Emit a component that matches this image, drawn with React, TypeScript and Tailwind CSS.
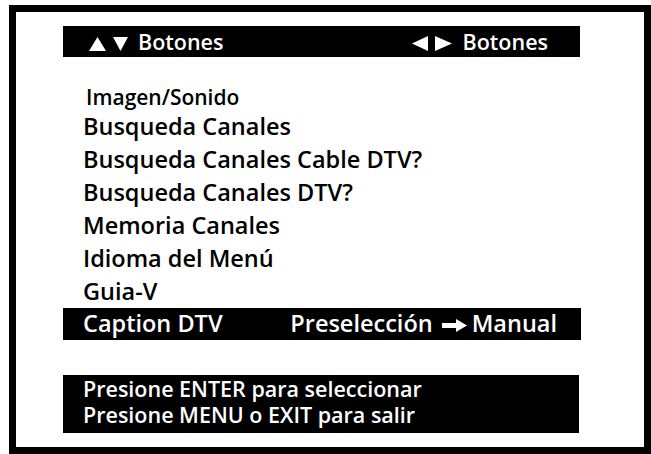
import React from "react";

const Tri = ({ dir, w, h }: { dir: "up" | "down" | "left" | "right"; w: number; h: number }) => {
  const pts: Record<string, string> = {
    up: `0,${h} ${w / 2},0 ${w},${h}`,
    down: `0,0 ${w},0 ${w / 2},${h}`,
    left: `${w},0 ${w},${h} 0,${h / 2}`,
    right: `0,0 ${w},${h / 2} 0,${h}`,
  };
  return (
    <svg width={w} height={h} viewBox={`0 0 ${w} ${h}`} className="block shrink-0">
      <polygon points={pts[dir]} fill="white" />
    </svg>
  );
};

export default function App() {
  const items = [
    "Busqueda Canales",
    "Busqueda Canales Cable DTV?",
    "Busqueda Canales DTV?",
    "Memoria Canales",
    "Idioma del Menú",
    "Guia-V",
  ];
  return (
    <div
      className="w-[651px] h-[454px] bg-white pl-[9px] pt-[5px]"
      style={{ fontFamily: '"Open Sans", "DejaVu Sans", sans-serif' }}
    >
      <div className="w-[642px] h-[449px] border-[7px] border-black pl-[47px] pt-[14px] flex flex-col">
        <div className="w-[517px] h-[31px] shrink-0 bg-black text-white flex items-center justify-between pl-[26px] pr-[32px] text-[21.5px] font-semibold leading-none">
          <div className="flex items-center">
            <div className="pt-[4px] flex items-center gap-[7px]">
              <Tri dir="up" w={17} h={14} />
              <Tri dir="down" w={15} h={14} />
            </div>
            <span className="ml-[10px]">Botones</span>
          </div>
          <div className="flex items-center">
            <div className="pt-[3px] flex items-center gap-[7px]">
              <Tri dir="left" w={16} h={15} />
              <Tri dir="right" w={17} h={15} />
            </div>
            <span className="ml-[11px]">Botones</span>
          </div>
        </div>
        <div className="mt-[28px] flex flex-col text-black">
          <div className="h-[25px] flex items-center pl-[23px] text-[21px] font-semibold leading-[25px]">
            Imagen/Sonido
          </div>
          {items.map((t) => (
            <div key={t} className="h-[33px] flex items-center pl-[20px] text-[23.5px] font-semibold leading-[33px]">
              {t}
            </div>
          ))}
        </div>
        <div className="w-[518px] h-[32px] shrink-0 bg-black text-white flex items-center justify-between pl-[20px] pr-[24px] text-[23.5px] font-semibold leading-none">
          <span>Caption DTV</span>
          <div className="flex items-center">
            <span>Preselección</span>
            <svg width="25" height="13" viewBox="0 0 25 13" className="ml-[9px] mr-[5px] mt-[2px]">
              <path d="M0 4h14V0l11 6.5L14 13V9H0z" fill="white" />
            </svg>
            <span>Manual</span>
          </div>
        </div>
        <div className="mt-[35px] w-[516px] h-[58px] shrink-0 bg-black text-white flex flex-col pt-[1px] pl-[20px] text-[21.5px] font-semibold leading-[26px]">
          <div>Presione ENTER para seleccionar</div>
          <div>Presione MENU o EXIT para salir</div>
        </div>
      </div>
    </div>
  );
}
